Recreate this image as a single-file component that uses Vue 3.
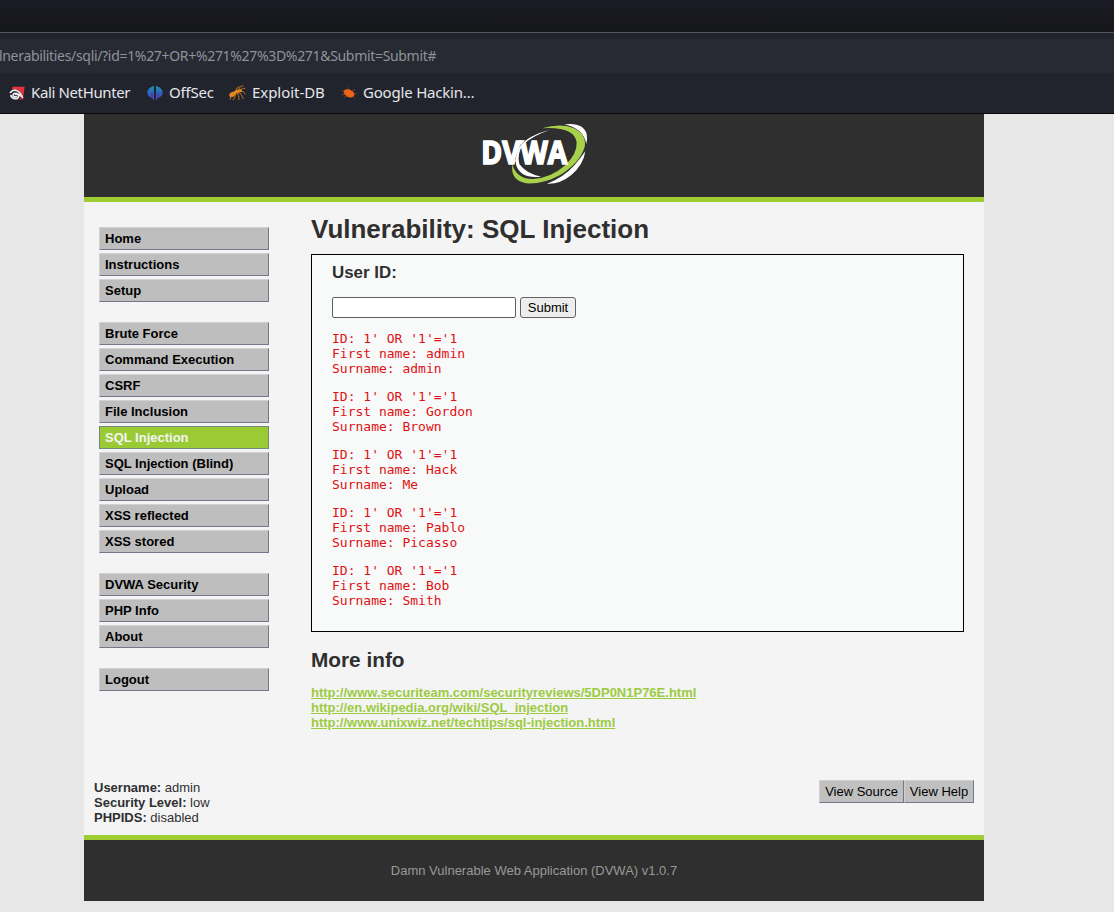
<script setup>
const menu = [
  ['Home', 'Instructions', 'Setup'],
  ['Brute Force', 'Command Execution', 'CSRF', 'File Inclusion', 'SQL Injection', 'SQL Injection (Blind)', 'Upload', 'XSS reflected', 'XSS stored'],
  ['DVWA Security', 'PHP Info', 'About'],
  ['Logout'],
]
const current = 'SQL Injection'
const rows = [
  ['admin', 'admin'],
  ['Gordon', 'Brown'],
  ['Hack', 'Me'],
  ['Pablo', 'Picasso'],
  ['Bob', 'Smith'],
]
const links = [
  'http://www.securiteam.com/securityreviews/5DP0N1P76E.html',
  'http://en.wikipedia.org/wiki/SQL_injection',
  'http://www.unixwiz.net/techtips/sql-injection.html',
]
</script>

<template>
  <div class="window">
    <div class="chrome">
      <div class="tabs"></div>
      <div class="urlbar"><span class="url">lnerabilities/sqli/?id=1%27+OR+%271%27%3D%271&amp;Submit=Submit#</span></div>
      <div class="bookmarks">
        <div class="mark nethunter">
          <svg width="16" height="16" viewBox="0 0 48 48">
            <path d="M11 5H47L42 42Q42 25 28 16Q20 11 9 13Z" fill="#e5313b" />
            <path d="M3 24Q12 12 24 17Q36 22 41 40Q30 25 17 25Q10 28 13 33Q18 38 24 34" fill="none" stroke="#f3edf0" stroke-width="5" />
            <path d="M18 28Q29 26 29 34Q28 42 17 41Q7 39 5 30" fill="none" stroke="#f3edf0" stroke-width="5" />
            <path d="M30 44Q38 40 33 31L43 44Z" fill="#b82a3a" />
          </svg>
          <span>Kali NetHunter</span>
        </div>
        <div class="mark offsec">
          <svg width="16" height="16" viewBox="0 0 48 48">
            <defs><linearGradient id="os" x1="0" y1="0" x2="0" y2="1"><stop offset="0" stop-color="#1799ab" /><stop offset=".5" stop-color="#315fc0" /><stop offset="1" stop-color="#6145c7" /></linearGradient></defs>
            <path d="M21 2V46Q16 44 15 36V5ZM27 2V46Q32 44 33 36V5ZM15 5V39Q1 35 1 22Q1 11 15 5ZM33 5V39Q47 35 47 22Q47 11 33 5Z" fill="url(#os)" />
            <path d="M14.5 24V42M33.5 24V42" stroke="#22242d" stroke-width="1.5" />
          </svg>
          <span>OffSec</span>
        </div>
        <div class="mark exploit">
          <svg width="17" height="16" viewBox="0 0 51 48">
            <g fill="#e8891c"><ellipse cx="11" cy="28" rx="11" ry="7" transform="rotate(-30 11 28)" /><ellipse cx="24" cy="20" rx="9" ry="5" transform="rotate(-20 24 20)" /><circle cx="34" cy="17" r="5" /></g>
            <path d="M18 21L24 9L31 4M25 18L34 5L43 2M34 16L42 10L49 10M32 18L43 20L49 28M26 22L36 27L43 42M23 23L29 32L30 45M19 24L18 35L12 46M12 29L5 36L3 44" fill="none" stroke="#cf7c22" stroke-width="2.6" />
          </svg>
          <span>Exploit-DB</span>
        </div>
        <div class="mark ghdb">
          <svg width="16" height="16" viewBox="0 0 48 48">
            <ellipse cx="24" cy="25" rx="17" ry="11" transform="rotate(24 24 25)" fill="#f06514" />
            <path d="M13 22L4 16M15 28L2 29M21 32L10 37M26 14L21 7M33 17L43 14M38 24L47 27M35 34L41 40" stroke="#a24a24" stroke-width="2" />
          </svg>
          <span>Google Hackin…</span>
        </div>
      </div>
    </div>

    <div class="container">
      <header class="header">
        <svg class="logo" width="110" height="64" viewBox="30 36 330 192">
          <path d="M283 43Q340 36 350 72Q353 87 349 102Q340 55 283 43Z" fill="#fff" />
          <path d="M346 124Q340 165 304 195Q270 223 231 221Q280 203 314 165Q331 145 346 124Z" fill="#fff" />
          <path d="M216 55Q272 39 310 54Q351 73 344 111Q330 158 272 194Q220 223 168 220Q121 212 127 163Q140 208 188 207Q240 206 286 166Q322 131 320 97Q312 49 216 55Z" fill="#a7d14a" />
          <text x="34" y="163" font-size="94" textLength="258" lengthAdjust="spacingAndGlyphs" class="word">DVWA</text>
          <path d="M166 91Q146 113 137 148" fill="none" stroke="#2f2f2f" stroke-width="3" />
          <path d="M239 60Q173 76 149 111Q121 164 157 191Q177 204 214 200Q168 191 148 162Q140 132 160 103Q191 76 239 60Z" fill="#fff" />
        </svg>
      </header>

      <div class="body">
        <nav class="menu">
          <ul v-for="(group, i) in menu" :key="i">
            <li v-for="item in group" :key="item" :class="{ selected: item === current }">{{ item }}</li>
          </ul>
        </nav>
        <main class="main">
          <h1>Vulnerability: SQL Injection</h1>
          <section class="box">
            <h3>User ID:</h3>
            <form @submit.prevent>
              <input type="text" class="field" />
              <button class="submit">Submit</button>
            </form>
            <pre v-for="r in rows" :key="r[0]">ID: 1' OR '1'='1
First name: {{ r[0] }}
Surname: {{ r[1] }}</pre>
          </section>
          <h2>More info</h2>
          <ul class="links">
            <li v-for="l in links" :key="l"><a>{{ l }}</a></li>
          </ul>
        </main>
      </div>

      <div class="system">
        <div><b>Username:</b> admin<br /><b>Security Level:</b> low<br /><b>PHPIDS:</b> disabled</div>
        <div class="actions"><button class="source">View Source</button><button class="help">View Help</button></div>
      </div>
      <footer class="footer">Damn Vulnerable Web Application (DVWA) v1.0.7</footer>
    </div>
  </div>
</template>

<style>
body { margin: 0; background: #e7e7e7; overflow: hidden; }
</style>

<style scoped>
* { box-sizing: border-box; }
.window { height: 912px; overflow: hidden; font: 13px/15px "Liberation Sans", Arial, sans-serif; color: #2f2f2f; }
ul { list-style: none; margin: 0; padding: 0; }
.chrome { height: 114px; background: #22242d; border-bottom: 1px solid #08080a; font-family: "Noto Sans", sans-serif; overflow: hidden; }
.tabs { height: 33px; background: linear-gradient(#1b1b25, #16171a); border-bottom: 1px solid #55565d; }
.urlbar { height: 34px; margin-top: 6px; background: #272933; color: #91929a; font-size: 14px; line-height: 34px; white-space: nowrap; }
.url { display: inline-block; margin-left: -1px; letter-spacing: -0.32px; }
.bookmarks { height: 40px; display: flex; align-items: center; padding-left: 9px; color: #e6e6ea; font-size: 15px; line-height: 20px; white-space: nowrap; }
.mark { display: flex; align-items: center; gap: 6px; flex: none; }
.mark span { margin-top: -2px; }
.nethunter { width: 138px; }
.nethunter span { letter-spacing: -0.37px; }
.offsec { width: 82px; }
.offsec span { letter-spacing: -0.2px; }
.exploit { width: 112px; }
.exploit span { letter-spacing: -0.05px; }
.ghdb span { letter-spacing: -0.2px; }
.container { width: 900px; margin-left: 84px; background: #f4f4f4; }
.header { height: 88px; background: #2f2f2f; border-bottom: 5px solid #a0cc33; padding: 8px 0 0 396px; }
.logo { display: block; }
.word { font-family: "Open Sans", "Noto Sans", sans-serif; font-weight: 700; fill: #fff; stroke: #fff; stroke-width: 5px; }
.body { height: 568px; display: flex; padding: 0 20px 0 15px; }
.menu { width: 170px; margin-right: 42px; padding-top: 25px; flex: none; }
.menu ul { display: flow-root; }
.menu ul + ul { margin-top: 20px; }
.menu li { height: 23px; margin-bottom: 3px; padding: 3px 5px; background: #bebebe; border: 1px solid; border-color: #d2d2d2 #747788 #747788 #d2d2d2; color: #000; font-weight: bold; line-height: 15px; }
.menu li.selected { background: #9acb34; color: #f4f4f4; border-color: #748a7c; }
.menu ul li:last-child { margin-bottom: 0; }
.main { flex: 1; }
h1, h2, h3 { margin: 0; font-weight: bold; }
h1 { font-size: 26px; line-height: 30px; padding-top: 12px; margin-bottom: 10px; }
.box { height: 378px; border: 1px solid #000; background: #f8faf9; padding: 8px 20px 0; }
h3 { font-size: 16.9px; line-height: 20px; }
form { display: flex; gap: 4px; margin: 14px 0 13px; }
.field { width: 184px; height: 21px; border: 1px solid #5e5e68; border-radius: 2px; padding: 0; background: #fff; }
.submit { width: 56px; height: 21px; border: 1px solid #62626b; border-radius: 3px; background: #ededed; padding: 0; font: 13px/15px "Liberation Sans", Arial, sans-serif; color: #000; }
pre { margin: 0 0 13px; font: 13px/15px "DejaVu Sans Mono", monospace; color: #e01013; }
h2 { font-size: 20.8px; line-height: 24px; margin: 16px 0 13px; }
.links a { color: #9ccb42; font-weight: bold; text-decoration: underline; }
.system { height: 65px; display: flex; justify-content: space-between; padding: 10px 10px 0; }
.actions { display: flex; }
.actions button { height: 23px; border: 1px solid; border-color: #cfcfcf #747788 #747788 #cfcfcf; background: #c0c0c0; padding: 0; font: 13px/15px "Liberation Sans", Arial, sans-serif; color: #000; }
.source { width: 85px; }
.help { width: 70px; }
.footer { height: 66px; background: #2f2f2f; border-top: 5px solid #a0cc33; color: #999; line-height: 15px; padding-top: 23px; text-align: center; }
</style>
